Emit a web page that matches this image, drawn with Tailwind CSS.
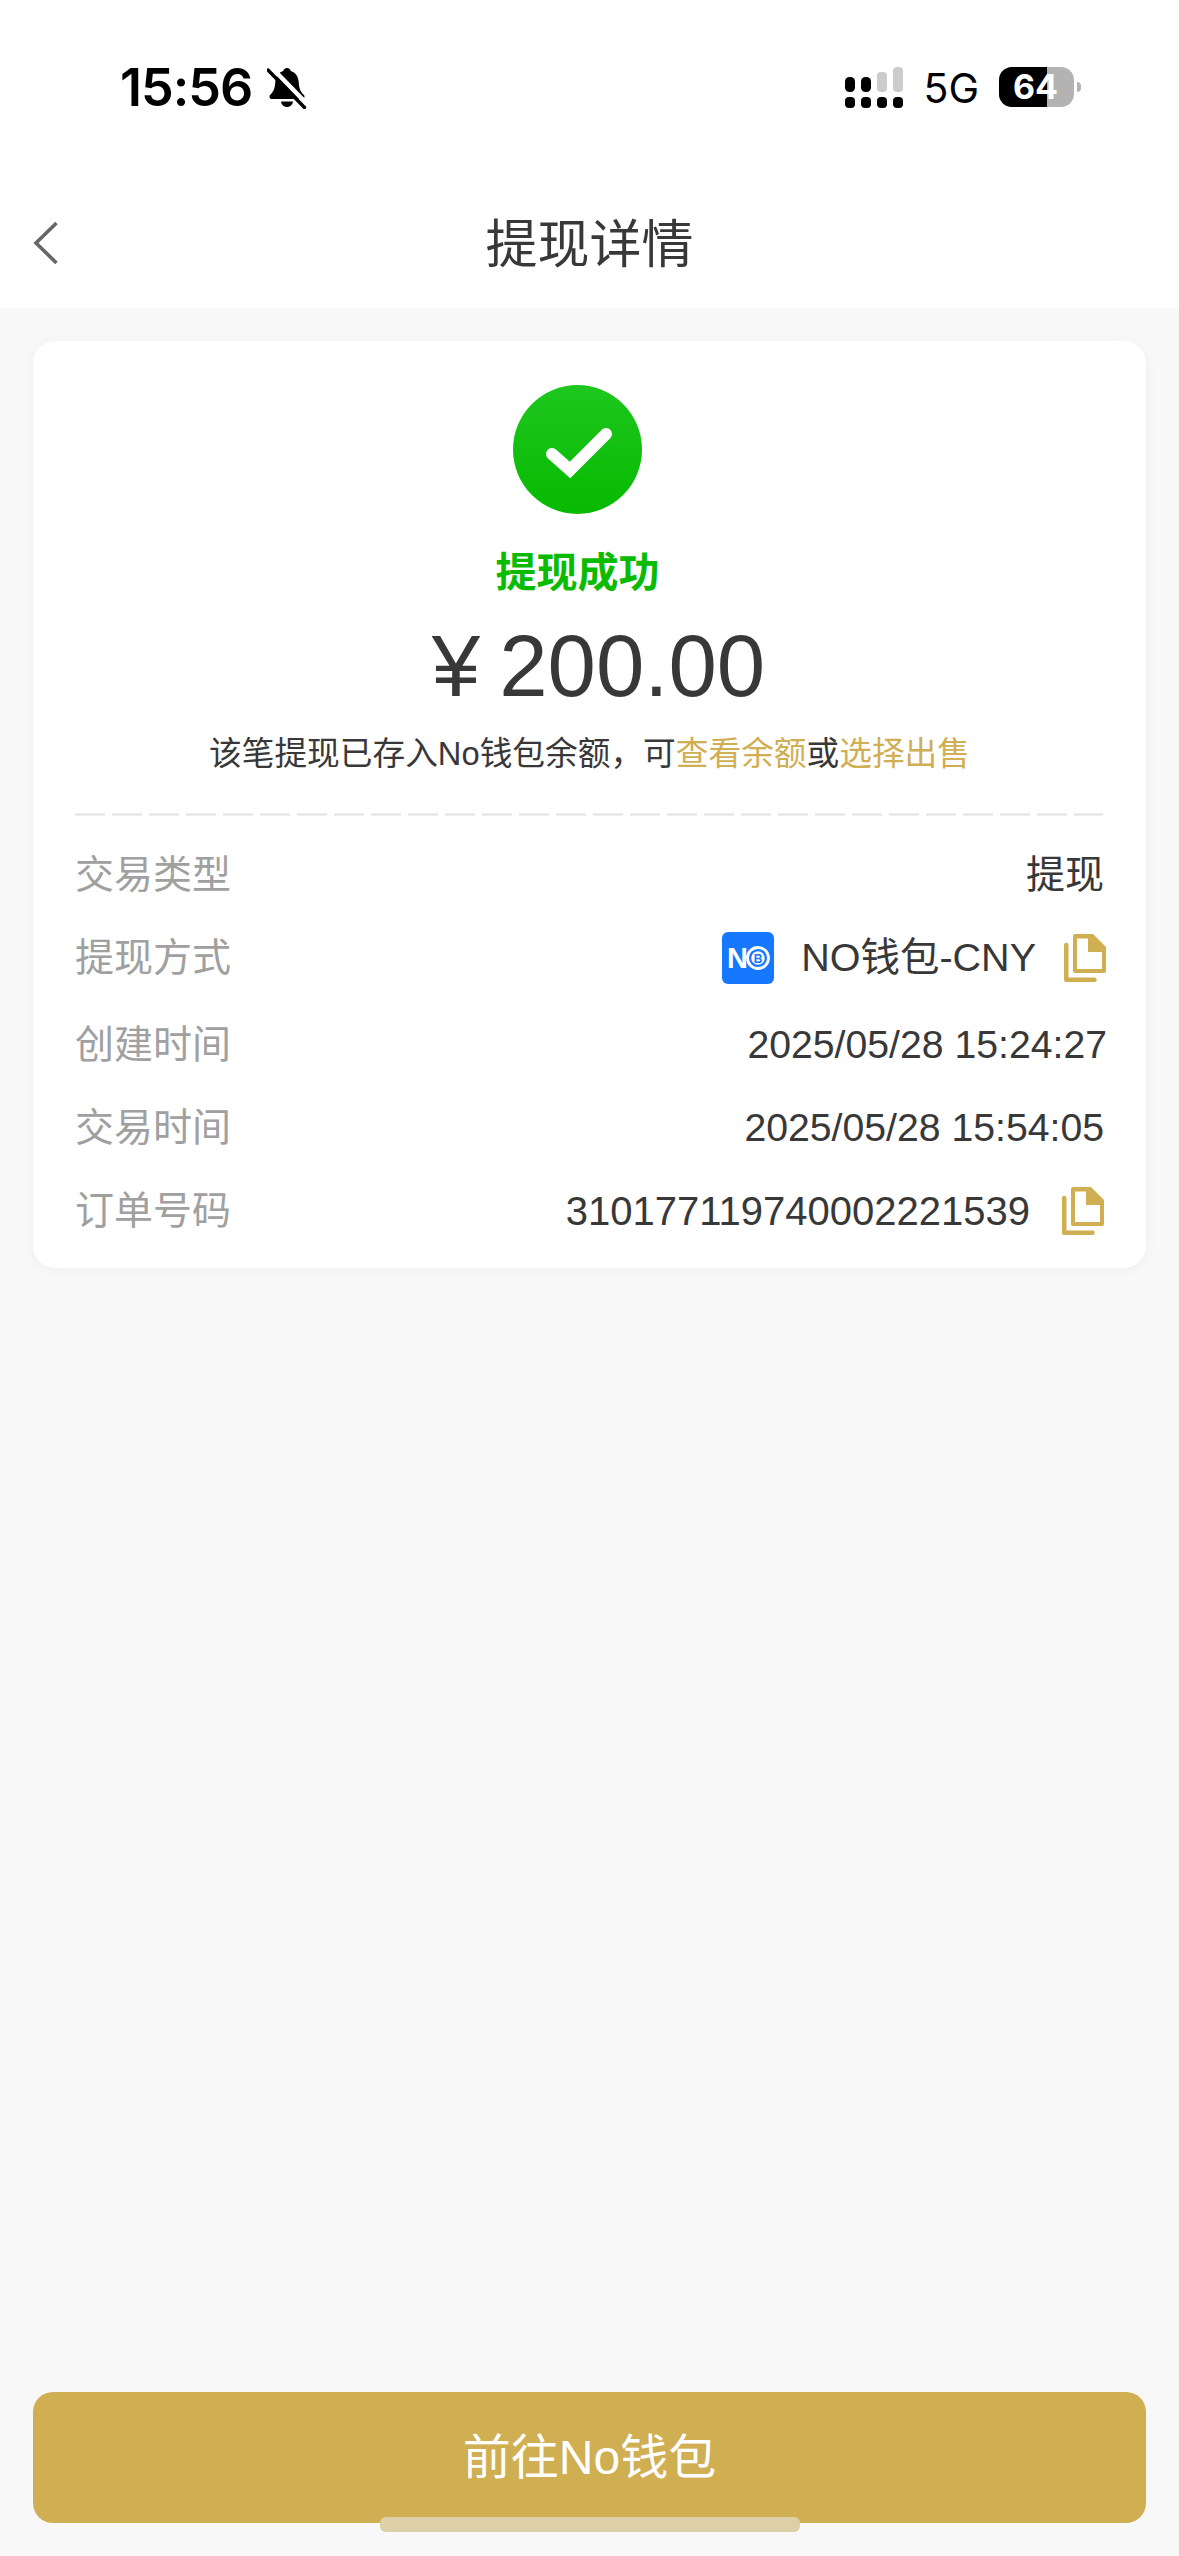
<!DOCTYPE html>
<html lang="zh-CN">
<head>
    <meta charset="UTF-8">
    <meta name="viewport" content="width=device-width, initial-scale=1.0">
    <title>提现详情</title>
    <script src="https://cdn.jsdelivr.net/npm/@tailwindcss/browser@4"></script>
</head>
<body class="bg-[#f8f8f8] font-['Liberation_Sans','Noto_Sans_CJK_SC',sans-serif] text-[#383838]">
    <div class="relative flex h-[2556px] w-[1179px] flex-col overflow-hidden">
        <!-- Status bar + nav -->
        <header class="h-[308px] shrink-0 bg-white">
            <div class="flex h-[170px] items-start justify-between pt-[64px] pl-[120px] pr-[98px]">
                <div class="flex items-center gap-[15px]">
                    <span class="font-['Inter',sans-serif] text-[52px] leading-[48px] font-semibold tracking-[-1px] text-black">15:56</span>
                    <svg width="40" height="42" viewBox="0 0 40 42">
                        <path d="M20 1c2.200 0 3.400 1.400 3.700 3 5 1.500 7.600 5.600 8 11 .4 6 1.500 9.500 5.300 13 1 1.500.5 4-2 4H5c-2.500 0-3-2.500-2-4 3.800-3.500 4.900-7 5.300-13 .4-5.400 3-9.500 8-11 .3-1.600 1.500-3 3.700-3z" fill="#000"/>
                        <path d="M14 34.500h12c-.4 3.400-3 5.500-6 5.500s-5.600-2.100-6-5.500z" fill="#000"/>
                        <path d="M4 0l36 37" stroke="#fff" stroke-width="4.500"/>
                        <path d="M1 3l36.500 37.500" stroke="#000" stroke-width="3.400" stroke-linecap="round"/>
                    </svg>
                </div>
                <div class="flex items-start">
                    <svg width="58" height="41" viewBox="0 0 58 41" class="mt-[3px]">
                        <rect x="0" y="10" width="10" height="15" rx="4.500" fill="#000"/>
                        <rect x="16" y="10" width="10" height="15" rx="4.500" fill="#000"/>
                        <rect x="32" y="5" width="10" height="20" rx="4" fill="#cccccc"/>
                        <rect x="48" y="0" width="10" height="25" rx="4" fill="#cccccc"/>
                        <rect x="0" y="30" width="10" height="11" rx="4" fill="#000"/>
                        <rect x="16" y="30" width="10" height="11" rx="4" fill="#000"/>
                        <rect x="32" y="30" width="10" height="11" rx="4" fill="#000"/>
                        <rect x="48" y="30" width="10" height="11" rx="4" fill="#000"/>
                    </svg>
                    <span class="ml-[20px] mt-[4px] font-['Inter',sans-serif] text-[41px] leading-[40px] font-normal text-black">5G</span>
                    <div class="relative ml-[20px] mt-[3px] h-[40px] w-[75px] overflow-hidden rounded-[13px] bg-[#b3b3b3]">
                        <div class="h-full w-[48px] bg-black"></div>
                        <span class="absolute inset-0 pr-[2px] text-center font-['Inter',sans-serif] text-[34px] leading-[40px] font-bold text-white">64</span>
                    </div>
                    <div class="ml-[3px] mt-[18px] h-[10px] w-[4px] rounded-r-full bg-[#b3b3b3]"></div>
                </div>
            </div>
            <div class="relative flex h-[138px] items-start justify-center">
                <svg width="26" height="44" viewBox="0 0 26 44" class="absolute left-[33px] top-[51px]">
                    <path d="M23.500 2 3 22l20.500 20" fill="none" stroke="#666666" stroke-width="3.600"/>
                </svg>
                <h1 class="mt-[45px] text-[52px] leading-[60px] font-normal">提现详情</h1>
            </div>
        </header>

        <main class="flex flex-1 flex-col px-[33px] pt-[33px] pb-[33px]">
            <!-- Detail card -->
            <section class="h-[927px] rounded-[22px] bg-white px-[42px] shadow-[0_2px_14px_rgba(0,0,0,0.04)]">
                <div class="flex flex-col items-center">
                    <svg width="129" height="129" viewBox="0 0 129 129" class="mt-[44px] mr-[25px]">
                        <defs>
                            <linearGradient id="okFill" x1="0" y1="0" x2="0" y2="1">
                                <stop offset="0" stop-color="#1ec71e"/>
                                <stop offset="1" stop-color="#06ba00"/>
                            </linearGradient>
                        </defs>
                        <circle cx="64.500" cy="64.500" r="64.500" fill="url(#okFill)"/>
                        <path d="M39 69l18 16 36-36" fill="none" stroke="#fff" stroke-width="12" stroke-linecap="round" stroke-linejoin="miter"/>
                    </svg>
                    <p class="mt-[35px] mr-[24px] text-[41px] leading-[48px] font-bold text-[#0abb00]">提现成功</p>
                    <p class="mt-[19px] ml-[18px] flex items-baseline gap-[19px] text-[87px] leading-[100px]"><span>¥</span><span>200.00</span></p>
                    <p class="mt-[16px] text-[32.700px] leading-[44px] whitespace-nowrap">该笔提现已存入No钱包余额，可<span class="text-[#d0ae52]">查看余额</span>或<span class="text-[#d0ae52]">选择出售</span></p>
                </div>

                <svg width="1028" height="3" class="mt-[37px] block">
                    <line x1="0" y1="1.500" x2="1028" y2="1.500" stroke="#e2e2e2" stroke-width="2.200" stroke-dasharray="30 7"/>
                </svg>

                <div class="mt-[30px] text-[39px]">
                    <div class="flex h-[58px] items-center justify-between">
                        <span class="text-[#a0a0a0]">交易类型</span>
                        <span>提现</span>
                    </div>
                    <div class="mt-[25px] flex h-[58px] items-center justify-between">
                        <span class="text-[#a0a0a0]">提现方式</span>
                        <div class="mr-[-2px] flex items-center">
                            <svg width="52" height="52" viewBox="0 0 52 52">
                                <rect width="52" height="52" rx="6" fill="#1677ff"/>
                                <text x="5" y="36" font-size="29" font-weight="700" fill="#fff" font-family="Liberation Sans">N</text>
                                <circle cx="36" cy="26" r="10.500" fill="none" stroke="#fff" stroke-width="2.800"/>
                                <circle cx="36" cy="26" r="6.800" fill="#fff"/>
                                <text x="36" y="30.500" text-anchor="middle" font-size="12" font-weight="700" fill="#1677ff" font-family="Liberation Sans">B</text>
                            </svg>
                            <span class="ml-[27px] text-[39.500px]">NO钱包-CNY</span>
                            <svg width="42" height="48" viewBox="0 0 42 48" class="ml-[28px]">
                                <path d="M0 11a2.200 2.200 0 0 1 4.500 0v32.500h26a2.200 2.200 0 0 1 0 4.500H2a2 2 0 0 1-2-2z" fill="#d0ae52"/>
                                <path d="M11 0h18l13 13v24a2 2 0 0 1-2 2H11a2 2 0 0 1-2-2V2a2 2 0 0 1 2-2z" fill="#d0ae52"/>
                                <path d="M13 4.500h11v13.500h14v17H13z" fill="#fff"/>
                            </svg>
                        </div>
                    </div>
                    <div class="mt-[29px] flex h-[58px] items-center justify-between">
                        <span class="text-[#a0a0a0]">创建时间</span>
                        <span class="mr-[-3px] text-[39.200px]">2025/05/28 15:24:27</span>
                    </div>
                    <div class="mt-[25px] flex h-[58px] items-center justify-between">
                        <span class="text-[#a0a0a0]">交易时间</span>
                        <span class="text-[39.200px]">2025/05/28 15:54:05</span>
                    </div>
                    <div class="mt-[25px] flex h-[58px] items-center justify-between">
                        <span class="text-[#a0a0a0]">订单号码</span>
                        <div class="flex items-center">
                            <span class="text-[40px]">310177119740002221539</span>
                            <svg width="42" height="48" viewBox="0 0 42 48" class="ml-[32px]">
                                <path d="M0 11a2.200 2.200 0 0 1 4.500 0v32.500h26a2.200 2.200 0 0 1 0 4.500H2a2 2 0 0 1-2-2z" fill="#d0ae52"/>
                                <path d="M11 0h18l13 13v24a2 2 0 0 1-2 2H11a2 2 0 0 1-2-2V2a2 2 0 0 1 2-2z" fill="#d0ae52"/>
                                <path d="M13 4.500h11v13.500h14v17H13z" fill="#fff"/>
                            </svg>
                        </div>
                    </div>
                </div>
            </section>

            <button class="mt-auto h-[131px] w-full rounded-[20px] bg-[#d0ae52] text-[48px] text-white">前往No钱包</button>
        </main>

        <!-- Home indicator sits on top of the button -->
        <div class="absolute bottom-[24px] left-[380px] h-[15px] w-[420px] rounded-[6px] bg-[#ddd0a8]"></div>
    </div>
</body>
</html>
